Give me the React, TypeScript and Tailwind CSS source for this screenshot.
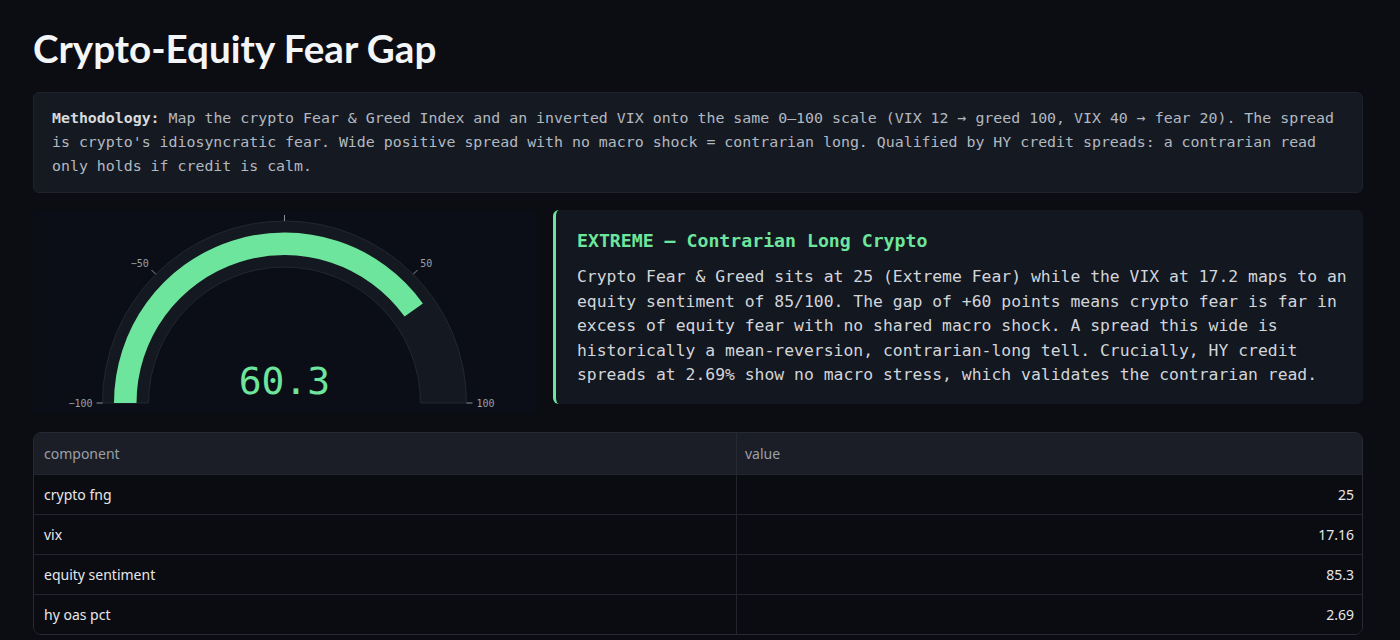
import React from "react";

const mono = "font-['DejaVu_Sans_Mono','Liberation_Mono',monospace]";

const rows = [
  { component: "crypto fng", value: "25" },
  { component: "vix", value: "17.16" },
  { component: "equity sentiment", value: "85.3" },
  { component: "hy oas pct", value: "2.69" },
];

function Gauge() {
  const cx = 251.5;
  const cy = 193;
  const ticks = [
    { a: 180, label: "−100", anchor: "end" },
    { a: 135, label: "−50", anchor: "end" },
    { a: 90, label: "0", anchor: "middle" },
    { a: 45, label: "50", anchor: "start" },
    { a: 0, label: "100", anchor: "start" },
  ];
  return (
    <svg width="503" height="203" viewBox="0 0 503 203" className="block">
      <path
        d={`M ${cx - 182} ${cy} A 182 182 0 0 1 ${cx + 182} ${cy} L ${cx + 136} ${cy} A 136 136 0 0 0 ${cx - 136} ${cy} Z`}
        fill="#141921"
        stroke="#232830"
        strokeWidth="1"
      />
      <path
        d="M 81 193 A 170.5 170.5 0 0 1 389.9 93.4 L 371.6 106.6 A 148 148 0 0 0 103.5 193 Z"
        fill="#6ee59c"
      />
      {ticks.map((t) => {
        const r = (t.a * Math.PI) / 180;
        const c = Math.cos(r);
        const s = Math.sin(r);
        const lx = cx + 192 * c;
        const ly = cy - 192 * s;
        return (
          <g key={t.label}>
            <line
              x1={cx + 182 * c}
              y1={cy - 182 * s}
              x2={cx + 188 * c}
              y2={cy - 188 * s}
              stroke="#8a9099"
              strokeWidth="1"
            />
            <text
              x={lx}
              y={t.a === 90 ? ly - 1 : t.a === 0 || t.a === 180 ? ly + 3.5 : ly}
              textAnchor={t.anchor as "end" | "middle" | "start"}
              fontSize="10"
              fill="#9aa0a8"
              fontFamily="DejaVu Sans Mono, monospace"
            >
              {t.label}
            </text>
          </g>
        );
      })}
      <text
        x={cx}
        y={184}
        textAnchor="middle"
        fontSize="38"
        fill="#6ee59c"
        fontFamily="DejaVu Sans Mono, monospace"
      >
        60.3
      </text>
    </svg>
  );
}

export default function App() {
  return (
    <div className="min-h-screen bg-[#0c0d12] pl-[33px] pr-[37px] pb-[8px]">
      <h1 className="pt-[22px] text-[38.6px] leading-[52px] font-bold text-[#f4f5f7] font-['Lato','Noto_Sans',sans-serif]">
        Crypto-Equity Fear Gap
      </h1>

      {/* methodology note */}
      <div
        className={`mt-[18px] rounded-md border border-[#1d222b] bg-[#151a22] px-[18px] pt-[13px] pb-[14px] text-[14.9px] leading-[24px] text-[#b3b8c0] ${mono}`}
      >
        <span className="font-bold text-[#d8dade]">Methodology:</span> Map the crypto Fear &amp; Greed Index and an
        inverted VIX onto the same 0–100 scale (VIX 12 → greed 100, VIX 40 → fear 20). The spread is crypto's
        idiosyncratic fear. Wide positive spread with no macro shock = contrarian long. Qualified by HY credit
        spreads: a contrarian read only holds if credit is calm.
      </div>

      <div className="mt-[17px] flex items-start gap-[17px]">
        <div className="w-[503px] shrink-0 overflow-hidden bg-[#0b0e16]">
          <Gauge />
        </div>
        <div className="flex-1 rounded-md border-l-[3px] border-[#6ee59c] bg-[#121720] pl-[21px] pr-[8px] pt-[19px] pb-[16px]">
          <div className={`text-[18.2px] leading-[24px] font-bold text-[#6ee59c] ${mono}`}>
            EXTREME — Contrarian Long Crypto
          </div>
          <p className={`mt-[12px] text-[16.4px] leading-[24.6px] text-[#d2d5da] ${mono}`}>
            Crypto Fear &amp; Greed sits at 25 (Extreme Fear) while the VIX at 17.2 maps to an equity sentiment of
            85/100. The gap of +60 points means crypto fear is far in excess of equity fear with no shared macro
            shock. A spread this wide is historically a mean-reversion, contrarian-long tell. Crucially, HY credit
            spreads at 2.69% show no macro stress, which validates the contrarian read.
          </p>
        </div>
      </div>

      {/* components table */}
      <div className="mt-[19px] overflow-hidden rounded-lg border border-[#262a33] font-['Noto_Sans',sans-serif] text-[14px]">
        <div className="flex h-[41px] items-center bg-[#1b1e26] text-[#9ca0a8]">
          <div className="w-[703px] border-r border-[#262a33] px-[10px] leading-[41px]">component</div>
          <div className="flex-1 px-[8px]">value</div>
        </div>
        {rows.map((r) => (
          <div key={r.component} className="flex h-[40px] items-center border-t border-[#22252d] bg-[#0b0c11] text-[#e6e7ea]">
            <div className="w-[703px] border-r border-[#22252d] px-[10px] leading-[39px]">{r.component}</div>
            <div className="flex-1 px-[8px] text-right">{r.value}</div>
          </div>
        ))}
      </div>
    </div>
  );
}
